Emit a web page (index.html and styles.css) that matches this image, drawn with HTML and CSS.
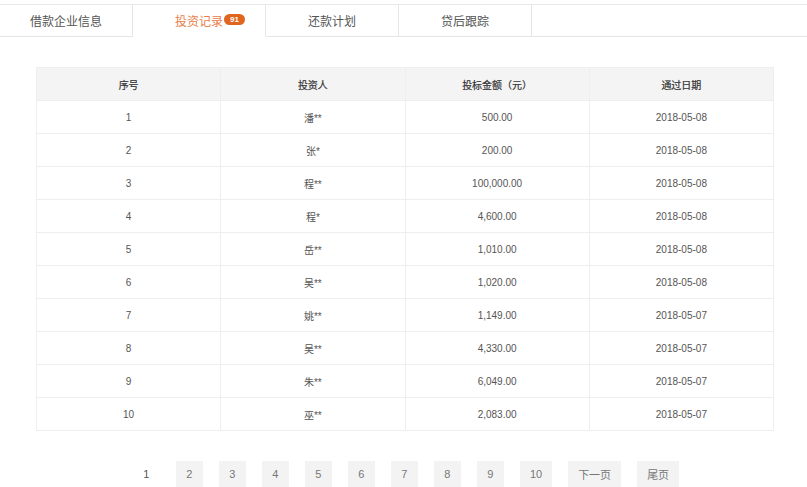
FILE: index.html
```html
<!DOCTYPE html>
<html lang="zh">
<head>
<meta charset="utf-8">
<link rel="stylesheet" href="styles.css">
</head>
<body>
<div class="tabs">
  <div class="tab">借款企业信息</div>
  <div class="tab active"><span class="tab-label">投资记录<span class="badge">91</span></span></div>
  <div class="tab">还款计划</div>
  <div class="tab">贷后跟踪</div>
  <div class="tab-fill"></div>
</div>
<div class="content">
  <table class="records">
    <thead>
      <tr><th>序号</th><th>投资人</th><th>投标金额（元）</th><th>通过日期</th></tr>
    </thead>
    <tbody>
      <tr><td>1</td><td>潘**</td><td>500.00</td><td>2018-05-08</td></tr>
      <tr><td>2</td><td>张*</td><td>200.00</td><td>2018-05-08</td></tr>
      <tr><td>3</td><td>程**</td><td>100,000.00</td><td>2018-05-08</td></tr>
      <tr><td>4</td><td>程*</td><td>4,600.00</td><td>2018-05-08</td></tr>
      <tr><td>5</td><td>岳**</td><td>1,010.00</td><td>2018-05-08</td></tr>
      <tr><td>6</td><td>吴**</td><td>1,020.00</td><td>2018-05-08</td></tr>
      <tr><td>7</td><td>姚**</td><td>1,149.00</td><td>2018-05-07</td></tr>
      <tr><td>8</td><td>吴**</td><td>4,330.00</td><td>2018-05-07</td></tr>
      <tr><td>9</td><td>朱**</td><td>6,049.00</td><td>2018-05-07</td></tr>
      <tr><td>10</td><td>巫**</td><td>2,083.00</td><td>2018-05-07</td></tr>
    </tbody>
  </table>
  <div class="pager">
    <span class="page current">1</span>
    <span class="page">2</span>
    <span class="page">3</span>
    <span class="page">4</span>
    <span class="page">5</span>
    <span class="page">6</span>
    <span class="page">7</span>
    <span class="page">8</span>
    <span class="page">9</span>
    <span class="page">10</span>
    <span class="page">下一页</span>
    <span class="page">尾页</span>
  </div>
</div>
</body>
</html>
```
FILE: styles.css
```css
html, body {
  margin: 0;
  padding: 0;
  background: #fff;
}
body {
  font-family: "Liberation Sans", "Noto Sans CJK SC", sans-serif;
  color: #555;
}
.tabs {
  display: flex;
  margin-top: 4px;
  border-top: 1px solid #e8e8e8;
}
.tab {
  box-sizing: border-box;
  width: 133px;
  height: 32px;
  border-right: 1px solid #e6e6e6;
  border-bottom: 1px solid #e6e6e6;
  display: flex;
  align-items: center;
  justify-content: center;
  font-size: 12px;
  color: #555;
  padding-bottom: 1px;
}
.tab.active {
  border-bottom-color: #fff;
  color: #e8804a;
}
.tab-fill {
  flex: 1;
  border-bottom: 1px solid #e6e6e6;
}
.tab-label {
  position: relative;
}
.badge {
  position: absolute;
  left: 100%;
  top: 50%;
  margin-left: 1px;
  margin-top: -6px;
  height: 11px;
  line-height: 11px;
  padding: 0 6px;
  border-radius: 6px;
  background: #e0651e;
  color: #fff;
  font-size: 8px;
  font-weight: bold;
}
.content {
  padding: 30px 33px 0 36px;
}
.records {
  width: 100%;
  border-collapse: collapse;
  table-layout: fixed;
  border: 1px solid #ececec;
  font-size: 10px;
}
.records th,
.records td {
  height: 32px;
  padding: 0;
  text-align: center;
  border: 1px solid #eeeeee;
}
.records th {
  background: #f4f4f5;
  color: #333;
  font-weight: normal;
  -webkit-text-stroke: 0.2px #333;
}
.records td {
  color: #555;
}
.pager {
  display: flex;
  justify-content: center;
  gap: 16px;
  margin-top: 30px;
  padding-left: 2px;
}
.page {
  box-sizing: border-box;
  height: 26px;
  min-width: 27px;
  padding: 0 10px;
  display: flex;
  align-items: center;
  justify-content: center;
  background: #f3f3f3;
  color: #777;
  font-size: 11px;
}
.page.current {
  background: transparent;
  color: #555;
}
```
